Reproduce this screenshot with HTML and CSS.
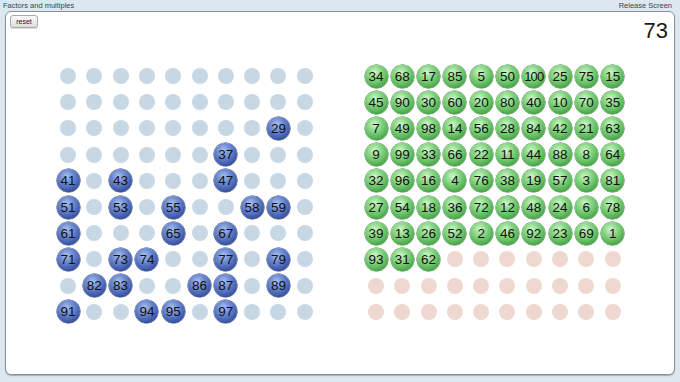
FILE: index.html
```html
<!DOCTYPE html>
<html>
<head>
<meta charset="utf-8">
<link rel="stylesheet" href="styles.css">
</head>
<body>
<div class="top">
  <span class="title">Factors and multiples</span>
  <span class="release">Release Screen</span>
</div>
<div class="panel">
  <div class="bar">
    <button class="reset">reset</button>
    <span class="score">73</span>
  </div>
  <div class="boards">
    <div class="grid">
      <i class="d"></i><i class="d"></i><i class="d"></i><i class="d"></i><i class="d"></i><i class="d"></i><i class="d"></i><i class="d"></i><i class="d"></i><i class="d"></i>
      <i class="d"></i><i class="d"></i><i class="d"></i><i class="d"></i><i class="d"></i><i class="d"></i><i class="d"></i><i class="d"></i><i class="d"></i><i class="d"></i>
      <i class="d"></i><i class="d"></i><i class="d"></i><i class="d"></i><i class="d"></i><i class="d"></i><i class="d"></i><i class="d"></i><b class="b">29</b><i class="d"></i>
      <i class="d"></i><i class="d"></i><i class="d"></i><i class="d"></i><i class="d"></i><i class="d"></i><b class="b">37</b><i class="d"></i><i class="d"></i><i class="d"></i>
      <b class="b">41</b><i class="d"></i><b class="b">43</b><i class="d"></i><i class="d"></i><i class="d"></i><b class="b">47</b><i class="d"></i><i class="d"></i><i class="d"></i>
      <b class="b">51</b><i class="d"></i><b class="b">53</b><i class="d"></i><b class="b">55</b><i class="d"></i><i class="d"></i><b class="b">58</b><b class="b">59</b><i class="d"></i>
      <b class="b">61</b><i class="d"></i><i class="d"></i><i class="d"></i><b class="b">65</b><i class="d"></i><b class="b">67</b><i class="d"></i><i class="d"></i><i class="d"></i>
      <b class="b">71</b><i class="d"></i><b class="b">73</b><b class="b">74</b><i class="d"></i><i class="d"></i><b class="b">77</b><i class="d"></i><b class="b">79</b><i class="d"></i>
      <i class="d"></i><b class="b">82</b><b class="b">83</b><i class="d"></i><i class="d"></i><b class="b">86</b><b class="b">87</b><i class="d"></i><b class="b">89</b><i class="d"></i>
      <b class="b">91</b><i class="d"></i><i class="d"></i><b class="b">94</b><b class="b">95</b><i class="d"></i><b class="b">97</b><i class="d"></i><i class="d"></i><i class="d"></i>
    </div>
    <div class="grid">
      <b class="g">34</b><b class="g">68</b><b class="g">17</b><b class="g">85</b><b class="g">5</b><b class="g">50</b><b class="g w">100</b><b class="g">25</b><b class="g">75</b><b class="g">15</b>
      <b class="g">45</b><b class="g">90</b><b class="g">30</b><b class="g">60</b><b class="g">20</b><b class="g">80</b><b class="g">40</b><b class="g">10</b><b class="g">70</b><b class="g">35</b>
      <b class="g">7</b><b class="g">49</b><b class="g">98</b><b class="g">14</b><b class="g">56</b><b class="g">28</b><b class="g">84</b><b class="g">42</b><b class="g">21</b><b class="g">63</b>
      <b class="g">9</b><b class="g">99</b><b class="g">33</b><b class="g">66</b><b class="g">22</b><b class="g">11</b><b class="g">44</b><b class="g">88</b><b class="g">8</b><b class="g">64</b>
      <b class="g">32</b><b class="g">96</b><b class="g">16</b><b class="g">4</b><b class="g">76</b><b class="g">38</b><b class="g">19</b><b class="g">57</b><b class="g">3</b><b class="g">81</b>
      <b class="g">27</b><b class="g">54</b><b class="g">18</b><b class="g">36</b><b class="g">72</b><b class="g">12</b><b class="g">48</b><b class="g">24</b><b class="g">6</b><b class="g">78</b>
      <b class="g">39</b><b class="g">13</b><b class="g">26</b><b class="g">52</b><b class="g">2</b><b class="g">46</b><b class="g">92</b><b class="g">23</b><b class="g">69</b><b class="g">1</b>
      <b class="g">93</b><b class="g">31</b><b class="g">62</b><i class="p"></i><i class="p"></i><i class="p"></i><i class="p"></i><i class="p"></i><i class="p"></i><i class="p"></i>
      <i class="p"></i><i class="p"></i><i class="p"></i><i class="p"></i><i class="p"></i><i class="p"></i><i class="p"></i><i class="p"></i><i class="p"></i><i class="p"></i>
      <i class="p"></i><i class="p"></i><i class="p"></i><i class="p"></i><i class="p"></i><i class="p"></i><i class="p"></i><i class="p"></i><i class="p"></i><i class="p"></i>
    </div>
  </div>
</div>
</body>
</html>
```
FILE: styles.css
```css
html, body {
  margin: 0;
  padding: 0;
}
body {
  width: 680px;
  height: 382px;
  background: #dce7ef;
  font-family: "Liberation Sans", Arial, sans-serif;
  overflow: hidden;
}
.top {
  display: flex;
  justify-content: space-between;
  height: 11px;
  padding: 0 8px 0 3px;
  font-size: 7.5px;
  line-height: 11px;
  color: #3a4550;
}
.panel {
  margin: 0 5px;
  height: 364px;
  background: #fff;
  border: 1px solid #8a9096;
  border-radius: 6px;
  box-shadow: 0 1px 1px rgba(0,0,0,0.25);
  box-sizing: border-box;
}
.bar {
  display: flex;
  justify-content: space-between;
  align-items: flex-start;
  padding: 3px 6px 0 4px;
  height: 47px;
  box-sizing: border-box;
}
.reset {
  width: 28px;
  height: 13px;
  padding: 0;
  font-family: "Liberation Sans", Arial, sans-serif;
  font-size: 7px;
  color: #222;
  background: linear-gradient(#fbfbfb, #dcdcdc);
  border: 1px solid #a8a8a8;
  border-radius: 3px;
  box-shadow: 0 1px 1px rgba(0,0,0,0.15);
}
.score {
  font-size: 22px;
  line-height: 28px;
  margin-top: 2px;
  color: #1a1a1a;
}
.boards {
  display: flex;
  gap: 45px;
  padding: 4px 0 0 48.9px;
}
.grid {
  display: grid;
  grid-template-columns: repeat(10, 26.3px);
  grid-auto-rows: 26.2px;
  align-items: center;
  justify-items: center;
}
.d, .p {
  display: block;
  width: 16px;
  height: 16px;
  border-radius: 50%;
  background: #c7d7e4;
}
.p {
  background: #efd8cf;
}
.b, .g {
  display: flex;
  align-items: center;
  justify-content: center;
  width: 23px;
  height: 23px;
  border-radius: 50%;
  font-weight: normal;
  font-size: 13.5px;
  color: #111;
  box-sizing: border-box;
}
.b {
  background: radial-gradient(circle at 42% 32%, #aac1ee 0%, #7592d6 28%, #4662b2 62%, #2b418a 88%, #223470 100%);
  box-shadow: 0 0 0 0.5px #27376e;
}
.g {
  background: radial-gradient(circle at 42% 32%, #d3f6cf 0%, #93dc8f 28%, #5cb85b 62%, #3c8f3e 88%, #2e7430 100%);
  box-shadow: 0 0 0 0.5px #2f7a33;
}
.w {
  font-size: 13px;
  letter-spacing: -0.9px;
}
```
